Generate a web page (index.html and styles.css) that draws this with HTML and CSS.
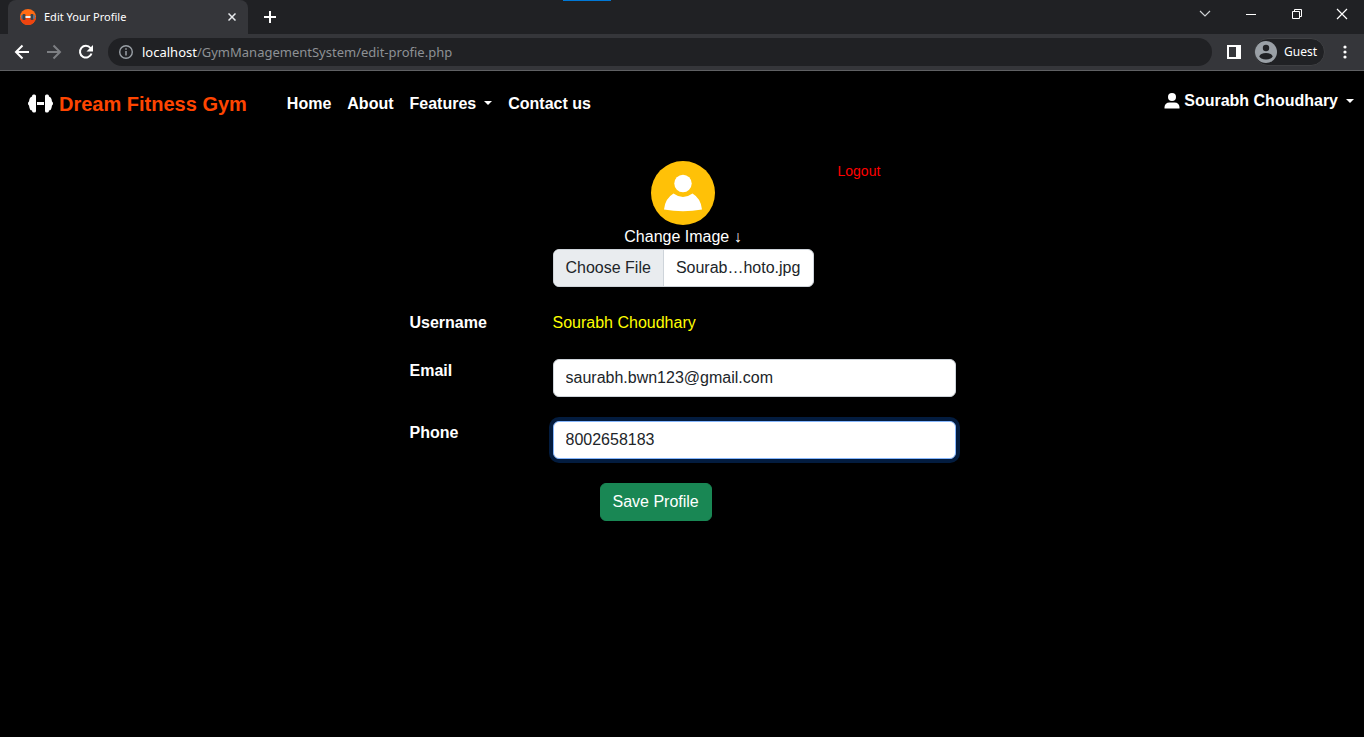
FILE: index.html
```html
<!DOCTYPE html>
<html lang="en">
<head>
<meta charset="utf-8">
<title>Edit Your Profile</title>
<link rel="stylesheet" href="styles.css">
</head>
<body>
<header class="browser">
  <div class="tabstrip">
    <div class="tab">
      <svg class="favicon" viewBox="0 0 16 16" aria-hidden="true"><circle cx="8" cy="8" r="8" fill="#ff6a14"/><path d="M0 8a8 8 0 0 0 16 0z" fill="#ee4410"/><rect x="1" y="6" width="2" height="4" rx="1" fill="#66788a"/><rect x="2.500" y="5" width="3" height="6" rx="1" fill="#34424f"/><rect x="10.500" y="5" width="3" height="6" rx="1" fill="#34424f"/><rect x="13" y="6" width="2" height="4" rx="1" fill="#66788a"/><rect x="5.500" y="7" width="5" height="2" fill="#e8eef2"/></svg>
      <span class="tab-title">Edit Your Profile</span>
      <button class="icon-button" aria-label="Close tab"><svg width="8" height="8" viewBox="0 0 8 8"><path d="M.5.5l7 7M7.500.5l-7 7" stroke="#e8eaed" stroke-width="1.500"/></svg></button>
    </div>
    <button class="icon-button new-tab" aria-label="New tab"><svg width="12" height="12" viewBox="0 0 12 12"><path d="M6 0v12M0 6h12" stroke="#fff" stroke-width="2"/></svg></button>
    <div class="window-controls">
      <button class="icon-button" aria-label="Search tabs"><svg width="12" height="8" viewBox="0 0 12 8"><path d="M1 1l5 5 5-5" fill="none" stroke="#d0d3d6" stroke-width="1.200"/></svg></button>
      <button class="icon-button" aria-label="Minimize"><svg width="10" height="10" viewBox="0 0 10 10"><path d="M0 5.500h10" stroke="#fff"/></svg></button>
      <button class="icon-button" aria-label="Restore"><svg width="10" height="10" viewBox="0 0 10 10"><path d="M.5 2.500h7v7h-7zM2.500 2.500v-2h7v7h-2" fill="none" stroke="#fff"/></svg></button>
      <button class="icon-button" aria-label="Close"><svg width="12" height="12" viewBox="0 0 12 12"><path d="M1 1l10 10M11 1L1 11" stroke="#fff" stroke-width="1.200"/></svg></button>
    </div>
    <div class="top-marker"></div>
  </div>
  <div class="toolbar">
    <button class="icon-button nav-button" aria-label="Back"><svg width="16" height="16" viewBox="0 0 16 16"><path d="M15 8H2M8.500 1.500L2 8l6.500 6.500" fill="none" stroke="#fff" stroke-width="2"/></svg></button>
    <button class="icon-button nav-button" aria-label="Forward"><svg width="16" height="16" viewBox="0 0 16 16"><path d="M1 8h13M7.500 1.500L14 8l-6.500 6.500" fill="none" stroke="#7d7f83" stroke-width="2"/></svg></button>
    <button class="icon-button nav-button" aria-label="Reload"><svg width="16" height="16" viewBox="0 0 16 16"><path d="M13.500 9.500a5.900 5.900 0 1 1-1-5.500L14 5.500" fill="none" stroke="#fff" stroke-width="2"/><path d="M15 1v6.500H8.500z" fill="#fff"/></svg></button>
    <div class="address">
      <svg width="14" height="14" viewBox="0 0 14 14" aria-hidden="true"><circle cx="7" cy="7" r="6.300" fill="none" stroke="#9aa0a6" stroke-width="1.400"/><path d="M7 6v4.500M7 3.300v1.500" stroke="#9aa0a6" stroke-width="1.500"/></svg>
      <span class="url"><span class="host">localhost</span>/GymManagementSystem/edit-profie.php</span>
    </div>
    <button class="icon-button side-panel" aria-label="Side panel"><svg width="14" height="14" viewBox="0 0 14 14"><path d="M1 1h12v12H1z" fill="none" stroke="#fff" stroke-width="2"/><path d="M9 0h5v14H9z" fill="#fff"/></svg></button>
    <button class="guest"><svg width="22" height="22" viewBox="0 0 22 22" aria-hidden="true"><circle cx="11" cy="11" r="11" fill="#9aa0a6"/><circle cx="11" cy="7" r="3.200" fill="#202124"/><ellipse cx="11" cy="15.300" rx="6.500" ry="3.200" fill="#202124"/></svg>Guest</button>
    <button class="icon-button menu" aria-label="Menu"><svg width="4" height="14" viewBox="0 0 4 14"><circle cx="2" cy="2" r="1.600" fill="#fff"/><circle cx="2" cy="7" r="1.600" fill="#fff"/><circle cx="2" cy="12" r="1.600" fill="#fff"/></svg></button>
  </div>
</header>

<nav class="navbar">
  <a class="brand" href="#"><svg width="25" height="20" viewBox="0 0 25 20" aria-hidden="true"><path d="M8 2v15q0 1.500-1.500 1.500H5.500Q4 18.500 4 16.500 2 16.500 1.500 14L1 11.500Q0 11 0 9.500T1 7.500L1.500 5Q2 3 4 2.500 4 .5 5.500.5h1Q8 .5 8 2zM17 2v15q0 1.500 1.500 1.500h1q1.500 0 1.500-2 2 0 2.500-2.500l.5-2.500q1-.5 1-2t-1-2L23.500 5Q23 3 21 2.500 21 .5 19.500.5h-1Q17 .5 17 2z" fill="#fff"/><path d="M9 8h7v3H9z" fill="#fff"/></svg>Dream Fitness Gym</a>
  <div class="links">
    <a href="#">Home</a>
    <a href="#">About</a>
    <a class="caret" href="#">Features</a>
    <a href="#">Contact us</a>
  </div>
  <a class="user caret" href="#"><svg width="16" height="16" viewBox="0 0 16 16" aria-hidden="true"><circle cx="8" cy="4" r="4" fill="#fff"/><path d="M.5 15.500V14q.5-4.500 5-4.500h5q4.500 0 5 4.500v1.500z" fill="#fff"/></svg>Sourabh Choudhary</a>
</nav>

<main>
  <form class="profile">
    <section class="photo">
      <div class="photo-main">
        <svg class="avatar" viewBox="0 0 64 64" aria-hidden="true"><circle cx="32" cy="32" r="32" fill="#ffc107"/><circle cx="32" cy="22.500" r="8.700" fill="#fff"/><path d="M22.500 32.500Q32 39.500 41.500 32.500 50 37.500 51 48.500 32 52 13 48.500 14 37.500 22.500 32.500z" fill="#fff"/></svg>
        <label for="image">Change Image ↓</label>
        <label class="file-picker"><input id="image" type="file" accept="image/*"><span class="file-button">Choose File</span><span class="file-name">Sourab…hoto.jpg</span></label>
      </div>
      <a class="logout" href="#">Logout</a>
    </section>
    <div class="fields">
      <span class="field-label">Username</span>
      <span class="username">Sourabh Choudhary</span>
      <label class="field-label" for="email">Email</label>
      <input class="control" id="email" type="email" value="saurabh.bwn123@gmail.com">
      <label class="field-label" for="phone">Phone</label>
      <input class="control" id="phone" type="tel" value="8002658183" autofocus>
      <button class="save" type="submit">Save Profile</button>
    </div>
  </form>
</main>
</body>
</html>
```

FILE: styles.css
```css
* {
  box-sizing: border-box;
}

body {
  margin: 0;
  background: #000;
  color: #fff;
  font: 16px/24px "Liberation Sans", Arial, sans-serif;
}

a {
  color: inherit;
  text-decoration: none;
}

button,
input {
  font: inherit;
}

svg {
  flex: none;
}

.browser {
  background: #35363a;
  border-bottom: 1px solid #5f6063;
  font: 12px/16px "Noto Sans", "Open Sans", sans-serif;
}

.tabstrip {
  position: relative;
  display: flex;
  align-items: center;
  height: 34px;
  padding-left: 8px;
  background: #202124;
}

.top-marker {
  position: absolute;
  top: 0;
  left: 563px;
  width: 48px;
  height: 1px;
  background: #0078d7;
}

.tab {
  display: flex;
  align-items: center;
  gap: 8px;
  width: 240px;
  height: 34px;
  padding: 0 12px;
  border-radius: 8px 8px 0 0;
  background: #35363a;
}

.favicon {
  width: 16px;
  height: 16px;
}

.tab-title {
  flex: 1;
  font-size: 11px;
}

.icon-button {
  display: flex;
  align-items: center;
  justify-content: center;
  padding: 0;
  border: 0;
  background: none;
}

.new-tab {
  margin-left: 16px;
}

.window-controls {
  display: flex;
  margin-left: auto;
  padding-bottom: 6px;
}

.window-controls .icon-button {
  width: 46px;
  height: 28px;
}

.window-controls .icon-button:last-child {
  width: 44px;
}

.toolbar {
  display: flex;
  align-items: center;
  height: 36px;
  padding-left: 6px;
}

.nav-button {
  width: 32px;
}

.address {
  display: flex;
  flex: 1;
  align-items: center;
  gap: 9px;
  height: 28px;
  margin-left: 6px;
  padding-left: 11px;
  border-radius: 14px;
  background: #202124;
}

.url {
  color: #8e9195;
  font-size: 13px;
}

.host {
  color: #fff;
}

.side-panel {
  width: 42px;
  padding-left: 2px;
}

.guest {
  display: flex;
  align-items: center;
  gap: 7px;
  height: 28px;
  padding: 0 7px 0 0;
  border: 1px solid #3f4043;
  border-radius: 14px;
  background: #202124;
  color: #fff;
}

.menu {
  width: 39px;
}

.navbar {
  display: flex;
  align-items: flex-start;
  padding: 18px 10px 0 28px;
  font-weight: bold;
}

.brand {
  display: flex;
  align-items: center;
  gap: 6px;
  padding-top: 3px;
  color: #ff4500;
  font-size: 20px;
}

.links {
  display: flex;
  gap: 16px;
  margin-left: 40px;
  padding-top: 3px;
}

.caret::after {
  content: "";
  display: inline-block;
  margin-left: 8px;
  border: 4px solid transparent;
  border-top-color: currentColor;
  border-bottom: 0;
  vertical-align: 4px;
}

.user {
  display: flex;
  align-items: center;
  margin-left: auto;
}

.user svg {
  margin-right: 4px;
}

.profile {
  margin-top: 45px;
}

.photo {
  display: grid;
  grid-template-columns: 1fr 261px 1fr;
  column-gap: 24px;
  padding-left: 2px;
}

.photo-main {
  display: flex;
  flex-direction: column;
  grid-column: 2;
  align-items: center;
}

.avatar {
  width: 64px;
  height: 64px;
}

.file-picker {
  display: flex;
  width: 100%;
  overflow: hidden;
  border: 1px solid #ced4da;
  border-radius: 6px;
  background: #fff;
  color: #212529;
}

.file-picker input {
  position: absolute;
  width: 1px;
  height: 1px;
  opacity: 0;
}

.file-button {
  padding: 6px 12px;
  border-right: 1px solid #ced4da;
  background: #e9ecef;
}

.file-name {
  padding: 6px 12px;
}

.logout {
  justify-self: start;
  color: #f00;
  font-size: 14px;
  line-height: 21px;
}

.fields {
  display: grid;
  grid-template-columns: 144px 403px;
  row-gap: 24px;
  justify-content: center;
  margin-top: 24px;
}

.field-label {
  padding-left: 1px;
  font-weight: bold;
}

.username {
  color: #ff0;
}

.control {
  width: 100%;
  height: 38px;
  padding: 6px 12px;
  border: 1px solid #ced4da;
  border-radius: 6px;
  background: #fff;
  color: #212529;
}

.control:focus {
  outline: 0;
  border-color: #86b7fe;
  box-shadow: 0 0 0 4px rgba(13, 110, 253, 0.25);
}

.save {
  grid-column: 2;
  justify-self: start;
  margin-left: 47px;
  padding: 6px 12px;
  border: 1px solid #198754;
  border-radius: 6px;
  background: #198754;
  color: #fff;
}
```
